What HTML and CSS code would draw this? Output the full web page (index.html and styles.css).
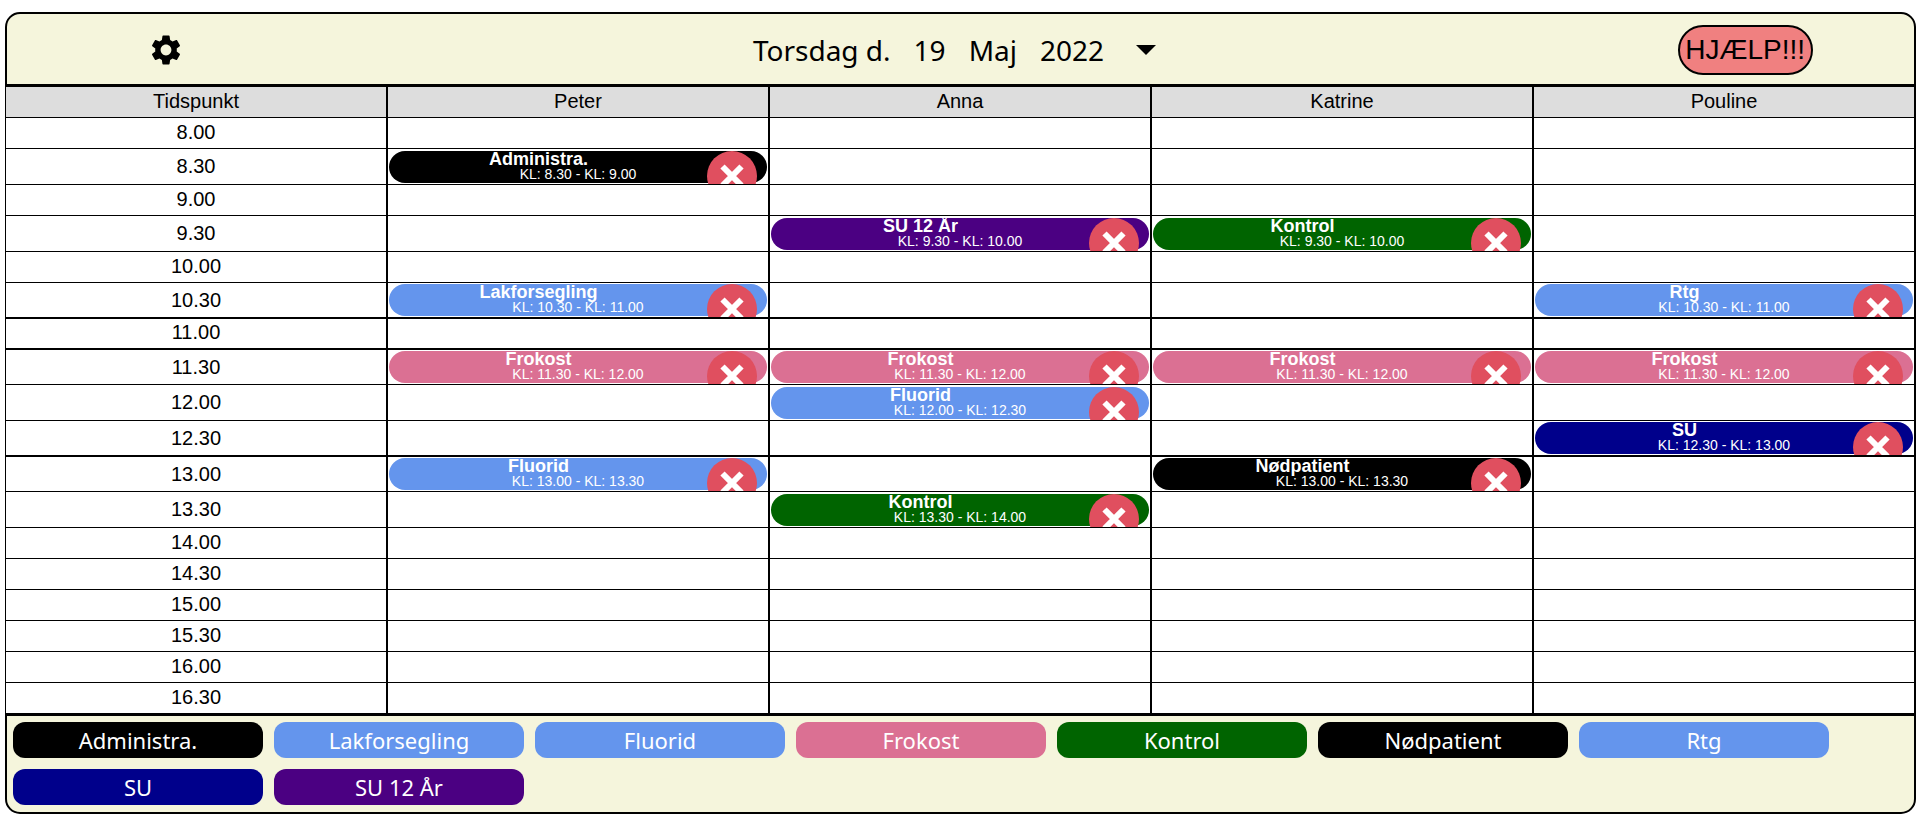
FILE: index.html
```html
<!DOCTYPE html>
<html lang="da">
<head>
<meta charset="utf-8">
<meta name="viewport" content="width=device-width, initial-scale=1">
<title>Kalender</title>
<link rel="stylesheet" href="styles.css">
<script src="app.js" defer></script>
</head>
<body>
<main class="planner">
  <header class="topbar">
    <div class="topbar-cell">
      <button class="icon-button" type="button" aria-label="Indstillinger">
        <svg class="gear" viewBox="2 2 20 20" aria-hidden="true"><path d="M19.14 12.94c.04-.3.06-.61.06-.94 0-.32-.02-.64-.07-.94l2.03-1.58c.18-.14.23-.41.12-.61l-1.92-3.32c-.12-.22-.37-.29-.59-.22l-2.39.96c-.5-.38-1.03-.7-1.62-.94l-.36-2.54c-.04-.24-.24-.41-.48-.41h-3.84c-.24 0-.43.17-.47.41l-.36 2.54c-.59.24-1.13.57-1.62.94l-2.39-.96c-.22-.08-.47 0-.59.22L2.74 8.87c-.12.21-.08.47.12.61l2.03 1.58c-.05.3-.09.63-.09.94s.02.64.07.94l-2.03 1.58c-.18.14-.23.41-.12.61l1.92 3.32c.12.22.37.29.59.22l2.39-.96c.5.38 1.03.7 1.62.94l.36 2.54c.05.24.24.41.48.41h3.84c.24 0 .44-.17.47-.41l.36-2.54c.59-.24 1.13-.56 1.62-.94l2.39.96c.22.08.47 0 .59-.22l1.92-3.32c.12-.22.07-.47-.12-.61l-2.01-1.58zM12 15.6c-1.98 0-3.6-1.62-3.6-3.6s1.62-3.6 3.6-3.6 3.6 1.62 3.6 3.6-1.62 3.6-3.6 3.6z"/></svg>
      </button>
    </div>
    <div class="topbar-cell date">
      <span>Torsdag d.</span><span>19</span><span>Maj</span><span>2022</span>
      <button class="icon-button date-toggle" type="button" aria-label="Vælg dato">
        <svg class="caret" viewBox="0 0 20 10" aria-hidden="true"><path d="M0 0h20L10 10z"/></svg>
      </button>
    </div>
    <div class="topbar-cell help-cell">
      <button class="help" type="button">HJÆLP!!!</button>
    </div>
  </header>
  <table class="schedule">
    <thead>
      <tr><th scope="col">Tidspunkt</th><th scope="col">Peter</th><th scope="col">Anna</th><th scope="col">Katrine</th><th scope="col">Pouline</th></tr>
    </thead>
    <tbody id="slots"></tbody>
  </table>
  <footer class="legend">
    <button class="type black" type="button">Administra.</button>
    <button class="type blue" type="button">Lakforsegling</button>
    <button class="type blue" type="button">Fluorid</button>
    <button class="type pink" type="button">Frokost</button>
    <button class="type green" type="button">Kontrol</button>
    <button class="type black" type="button">Nødpatient</button>
    <button class="type blue" type="button">Rtg</button>
    <button class="type navy" type="button">SU</button>
    <button class="type indigo" type="button">SU 12 År</button>
  </footer>
</main>
</body>
</html>
```

FILE: app.js
```js
const lunch = ["Frokost", "pink"];

// [time, row class, bookings for Peter, Anna, Katrine and Pouline]
const slots = [
  ["8.00", "", []],
  ["8.30", "booked", [["Administra.", "black"]]],
  ["9.00", "", []],
  ["9.30", "booked", [null, ["SU 12 År", "indigo"], ["Kontrol", "green"]]],
  ["10.00", "", []],
  ["10.30", "booked tight ruled", [["Lakforsegling", "blue"], null, null, ["Rtg", "blue"]]],
  ["11.00", "ruled", []],
  ["11.30", "booked tight", [lunch, lunch, lunch, lunch]],
  ["12.00", "booked", [null, ["Fluorid", "blue"]]],
  ["12.30", "booked tight ruled", [null, null, null, ["SU", "navy"]]],
  ["13.00", "booked tight", [["Fluorid", "blue"], null, ["Nødpatient", "black"]]],
  ["13.30", "booked", [null, ["Kontrol", "green"]]],
  ["14.00", "", []],
  ["14.30", "", []],
  ["15.00", "", []],
  ["15.30", "", []],
  ["16.00", "", []],
  ["16.30", "", []]
];

function booking([name, color], start, end) {
  return `<div class="booking"><div class="pill ${color}"><strong>${name}</strong>` +
    `<span>KL: ${start} - KL: ${end}</span></div>` +
    `<button class="remove" type="button" aria-label="Slet ${name} ${start}">` +
    `<svg viewBox="0 0 50 50" aria-hidden="true"><circle cx="25" cy="25" r="25"/>` +
    `<path d="M15.5 15.5l19 19M34.5 15.5l-19 19"/></svg></button></div>`;
}

document.getElementById("slots").innerHTML = slots.map(([time, kind, list], i) => {
  const end = i + 1 < slots.length ? slots[i + 1][0] : "";
  const cells = [0, 1, 2, 3].map(c => `<td>${list[c] ? booking(list[c], time, end) : ""}</td>`).join("");
  return `<tr class="${kind}"><th scope="row">${time}</th>${cells}</tr>`;
}).join("");
```

FILE: styles.css
```css
* {
  box-sizing: border-box;
}

body {
  margin: 12px 4px 0 5px;
  background: #fff;
  color: #000;
  font-family: "Liberation Sans", Arial, sans-serif;
}

button {
  margin: 0;
  padding: 0;
  border: 0;
  background: none;
  color: inherit;
  font: inherit;
  cursor: pointer;
}

svg {
  display: block;
}

/* Top bar */
.topbar {
  display: grid;
  grid-template-columns: 1fr 4fr 1fr;
  height: 75px;
  padding-top: 2px;
  border: 2px solid #000;
  border-bottom-width: 3px;
  border-radius: 15px 15px 0 0;
  background: beige;
}

.topbar-cell {
  display: flex;
  align-items: center;
  justify-content: center;
}

.gear {
  width: 30px;
  height: 30px;
}

.date {
  gap: 23px;
  padding-right: 12px;
  font: 28px/40px "Noto Sans", sans-serif;
}

.date-toggle {
  padding: 0 0 0 9px;
}

.caret {
  width: 20px;
  height: 10px;
}

.help-cell {
  padding-right: 20px;
}

.help {
  width: 135px;
  height: 50px;
  border: 2px solid #000;
  border-radius: 25px;
  background: lightcoral;
  font-size: 28px;
}

/* Schedule */
.schedule {
  width: 100%;
  table-layout: fixed;
  border-collapse: separate;
  border-spacing: 0;
  border-left: 1px solid #000;
  font-size: 20px;
  line-height: 23px;
}

.schedule tr {
  height: 31px;
}

.schedule th,
.schedule td {
  padding: 0;
  border: solid #000;
  border-width: 0 2px 1px 0;
  font-weight: 400;
  text-align: center;
}

.schedule th {
  padding-bottom: 2px;
}

.schedule thead th {
  background: #ddd;
}

.schedule .booked th {
  padding-bottom: 0;
}

.schedule td {
  vertical-align: top;
}

.schedule .ruled > * {
  border-bottom-width: 2px;
}

.schedule tbody tr:last-child {
  height: 30px;
}

.schedule tbody tr:last-child > * {
  border-bottom-width: 0;
}

.booking {
  position: relative;
  height: 33px;
  margin: 2px 1px 0;
}

.tight .booking {
  margin-top: 1px;
}

.pill {
  display: flex;
  flex-direction: column;
  height: 32px;
  border-radius: 16px;
  color: #fff;
}

.pill strong {
  padding-right: 79px;
  font-size: 18px;
  line-height: 16px;
}

.pill span {
  font-size: 14px;
  line-height: 14px;
}

.remove {
  position: absolute;
  top: 0;
  right: 10px;
  width: 50px;
  height: 100%;
  overflow: hidden;
}

.remove svg {
  position: absolute;
  top: 0;
  left: 0;
  width: 50px;
  height: 50px;
}

.remove circle {
  fill: #e04f5f;
}

.remove path {
  stroke: #fff;
  stroke-width: 6;
}

/* Booking types */
.legend {
  display: grid;
  grid-template-columns: repeat(auto-fill, 250px);
  gap: 11px;
  padding: 6px 6px 7px;
  border: 2px solid #000;
  border-top-width: 3px;
  border-radius: 0 0 15px 15px;
  background: beige;
}

.type {
  height: 36px;
  border-radius: 12px;
  color: #fff;
  font: 22px/32px "Noto Sans", sans-serif;
}

.black { background: black; }
.blue { background: cornflowerblue; }
.pink { background: palevioletred; }
.green { background: darkgreen; }
.navy { background: darkblue; }
.indigo { background: indigo; }
```
